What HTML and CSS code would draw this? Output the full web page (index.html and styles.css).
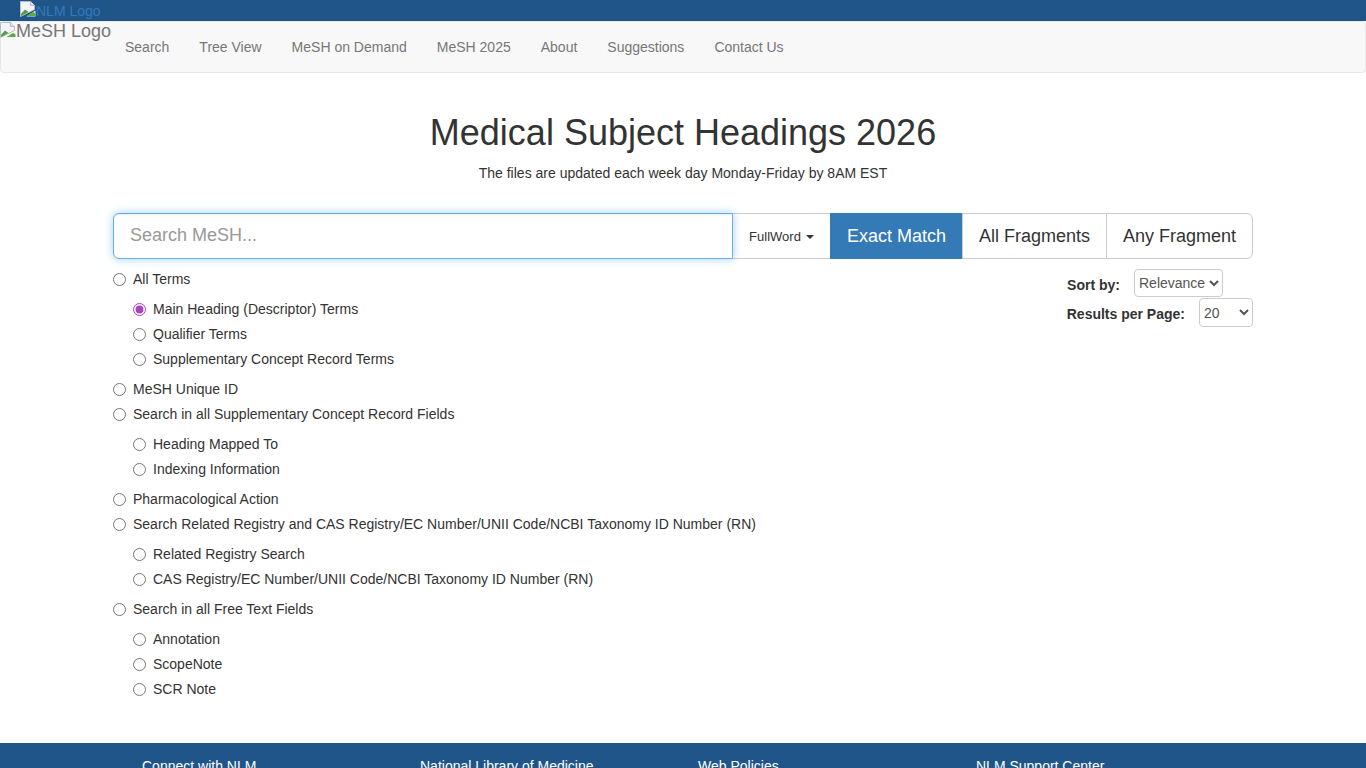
FILE: index.html
```html
<!DOCTYPE html>
<html lang="en">
<head>
<meta charset="utf-8">
<title>Medical Subject Headings 2026</title>
<link rel="stylesheet" href="styles.css">
</head>
<body>
<div class="topbar">
  <a class="nlm-link" href="#"><svg class="broken" viewBox="0 0 16 16"><path d="M.500.500h10l4 4v4l-14 7z" fill="#f2f4f7" stroke="#b8bcc4"/><path d="M10.500.500v4h4" fill="#dfe3ea" stroke="#b8bcc4"/><path d="M1 13l4-4.500 3.500 2.500-7.500 4z" fill="#4f9e3f"/><path d="M6.500 15.500h9V9.500z" fill="#e6f2dc"/><path d="M6.500 15l6.500-4 2.500 1.500v2.500z" fill="#5fa945"/></svg>NLM Logo</a>
</div>
<nav class="navbar">
  <a class="brand" href="#"><svg class="broken" viewBox="0 0 16 16"><path d="M.500.500h10l4 4v4l-14 7z" fill="#f2f4f7" stroke="#b8bcc4"/><path d="M10.500.500v4h4" fill="#dfe3ea" stroke="#b8bcc4"/><path d="M1 13l4-4.500 3.500 2.500-7.500 4z" fill="#4f9e3f"/><path d="M6.500 15.500h9V9.500z" fill="#e6f2dc"/><path d="M6.500 15l6.500-4 2.500 1.500v2.500z" fill="#5fa945"/></svg>MeSH Logo</a>
  <ul class="nav-list">
    <li><a href="#">Search</a></li>
    <li><a href="#">Tree View</a></li>
    <li><a href="#">MeSH on Demand</a></li>
    <li><a href="#">MeSH 2025</a></li>
    <li><a href="#">About</a></li>
    <li><a href="#">Suggestions</a></li>
    <li><a href="#">Contact Us</a></li>
  </ul>
</nav>
<main class="container">
  <h1 class="title">Medical Subject Headings 2026</h1>
  <p class="subtitle">The files are updated each week day Monday-Friday by 8AM EST</p>
  <form class="search-form">
    <div class="search-group">
      <input class="search-input" type="text" placeholder="Search MeSH...">
      <button class="btn btn-drop" type="button">FullWord<span class="caret"></span></button>
      <button class="btn btn-active" type="button">Exact Match</button>
      <button class="btn btn-all" type="button">All Fragments</button>
      <button class="btn btn-last" type="button">Any Fragment</button>
    </div>
    <div class="options">
      <div class="radios">
        <label class="radio"><input type="radio" name="s">All Terms</label>
        <div class="sub">
          <label class="radio"><input type="radio" name="s" checked>Main Heading (Descriptor) Terms</label>
          <label class="radio"><input type="radio" name="s">Qualifier Terms</label>
          <label class="radio"><input type="radio" name="s">Supplementary Concept Record Terms</label>
        </div>
        <label class="radio"><input type="radio" name="s">MeSH Unique ID</label>
        <label class="radio"><input type="radio" name="s">Search in all Supplementary Concept Record Fields</label>
        <div class="sub">
          <label class="radio"><input type="radio" name="s">Heading Mapped To</label>
          <label class="radio"><input type="radio" name="s">Indexing Information</label>
        </div>
        <label class="radio"><input type="radio" name="s">Pharmacological Action</label>
        <label class="radio"><input type="radio" name="s">Search Related Registry and CAS Registry/EC Number/UNII Code/NCBI Taxonomy ID Number (RN)</label>
        <div class="sub">
          <label class="radio"><input type="radio" name="s">Related Registry Search</label>
          <label class="radio"><input type="radio" name="s">CAS Registry/EC Number/UNII Code/NCBI Taxonomy ID Number (RN)</label>
        </div>
        <label class="radio"><input type="radio" name="s">Search in all Free Text Fields</label>
        <div class="sub">
          <label class="radio"><input type="radio" name="s">Annotation</label>
          <label class="radio"><input type="radio" name="s">ScopeNote</label>
          <label class="radio"><input type="radio" name="s">SCR Note</label>
        </div>
      </div>
      <div class="sorters">
        <div class="sort-row sort-first"><label class="sort-label sort-label-first">Sort by:</label><select class="select select-sort"><option>Relevance</option></select></div>
        <div class="sort-row"><label class="sort-label">Results per Page:</label><select class="select select-num"><option>20</option></select></div>
      </div>
    </div>
  </form>
</main>
<footer class="footer">
  <div class="foot-col">Connect with NLM</div>
  <div class="foot-col">National Library of Medicine</div>
  <div class="foot-col">Web Policies</div>
  <div class="foot-col">NLM Support Center</div>
</footer>
</body>
</html>
```
FILE: styles.css
```css
* { box-sizing: border-box; }
html, body { margin: 0; padding: 0; }
body {
  font-family: "Liberation Sans", Arial, sans-serif;
  font-size: 14px;
  line-height: 20px;
  color: #333;
  background: #fff;
  height: 768px;
  overflow: hidden;
}
a { text-decoration: none; }
.topbar {
  height: 21px;
  background: #20558a;
  padding: 1px 0 0 20px;
  overflow: hidden;
}
.nlm-link {
  display: flex;
  align-items: flex-start;
  color: #337ab7;
  line-height: 20px;
}
.broken { width: 16px; height: 16px; flex: none; }
.navbar {
  display: flex;
  height: 52px;
  background: #f8f8f8;
  border: 1px solid #e7e7e7;
  border-radius: 4px;
}
.brand {
  display: flex;
  align-items: flex-start;
  width: 110px;
  height: 20px;
  margin: -1px 0 0 -1px;
  font-size: 18px;
  line-height: 20px;
  color: #777;
  white-space: nowrap;
}
.brand .broken { margin-top: 1px; }
.nav-list {
  display: flex;
  list-style: none;
  margin: 0;
  padding: 0;
}
.nav-list a {
  display: block;
  padding: 15px;
  color: #777;
}
.container {
  width: 1140px;
  margin: 0 auto;
}
.title {
  margin: 40px 0 0;
  font-size: 36px;
  font-weight: 500;
  line-height: 40px;
  text-align: center;
}
.subtitle {
  margin: 10px 0 0;
  text-align: center;
}
.search-form { margin-top: 30px; }
.search-group { display: flex; height: 46px; }
.search-input {
  width: 620px;
  height: 46px;
  padding: 9px 16px 11px;
  font: inherit;
  font-size: 18px;
  color: #555;
  border: 1px solid #66afe9;
  border-radius: 6px 0 0 6px;
  outline: 0;
  box-shadow: inset 0 1px 1px rgba(0,0,0,.075), 0 0 8px rgba(102,175,233,.6);
  position: relative;
  z-index: 1;
}
.search-input::placeholder { color: #999; opacity: 1; }
.btn {
  height: 46px;
  padding: 0;
  margin: 0 0 0 -1px;
  font: inherit;
  font-size: 18px;
  color: #333;
  background: #fff;
  border: 1px solid #ccc;
}
.btn-drop {
  width: 99px;
  padding: 1px 0 0;
  font-size: 13px;
  border-left-color: #fff;
  border-right-color: #fff;
}
.btn-active {
  width: 133px;
  color: #fff;
  background: #337ab7;
  border-color: #337ab7;
}
.btn-all { width: 145px; }
.btn-last {
  width: 147px;
  border-radius: 0 6px 6px 0;
}
.caret {
  display: inline-block;
  margin-left: 5px;
  vertical-align: middle;
  border-top: 4px solid #333;
  border-left: 4px solid transparent;
  border-right: 4px solid transparent;
}
.options {
  display: flex;
  justify-content: space-between;
  align-items: flex-start;
}
.radios { padding-top: 7px; }
.radio {
  display: flex;
  align-items: center;
  height: 25px;
  white-space: nowrap;
}
.radio input {
  width: 13px;
  height: 13px;
  margin: 2px 7px 0 0;
  accent-color: #a742c5;
}
.sub { padding: 5px 0 5px 20px; }
.sorters {
  display: flex;
  flex-direction: column;
  align-items: flex-end;
  padding-top: 10px;
  gap: 1px;
}
.sort-row { display: flex; align-items: center; }
.sort-first { margin-right: 30px; }
.sort-label { font-weight: 700; margin-right: 14px; padding-top: 3px; }
.select {
  height: 28px;
  padding: 0;
  font: inherit;
  color: #555;
  background: #fff;
  border: 1px solid #ccc;
  border-radius: 4px;
}
.select-sort { width: 89px; }
.select-num { width: 54px; height: 29px; }
.footer {
  display: grid;
  grid-template-columns: repeat(4, 278px);
  height: 25px;
  margin-top: 37px;
  padding: 13px 0 0 142px;
  color: #fff;
  background: #20558a;
  overflow: hidden;
}
```
